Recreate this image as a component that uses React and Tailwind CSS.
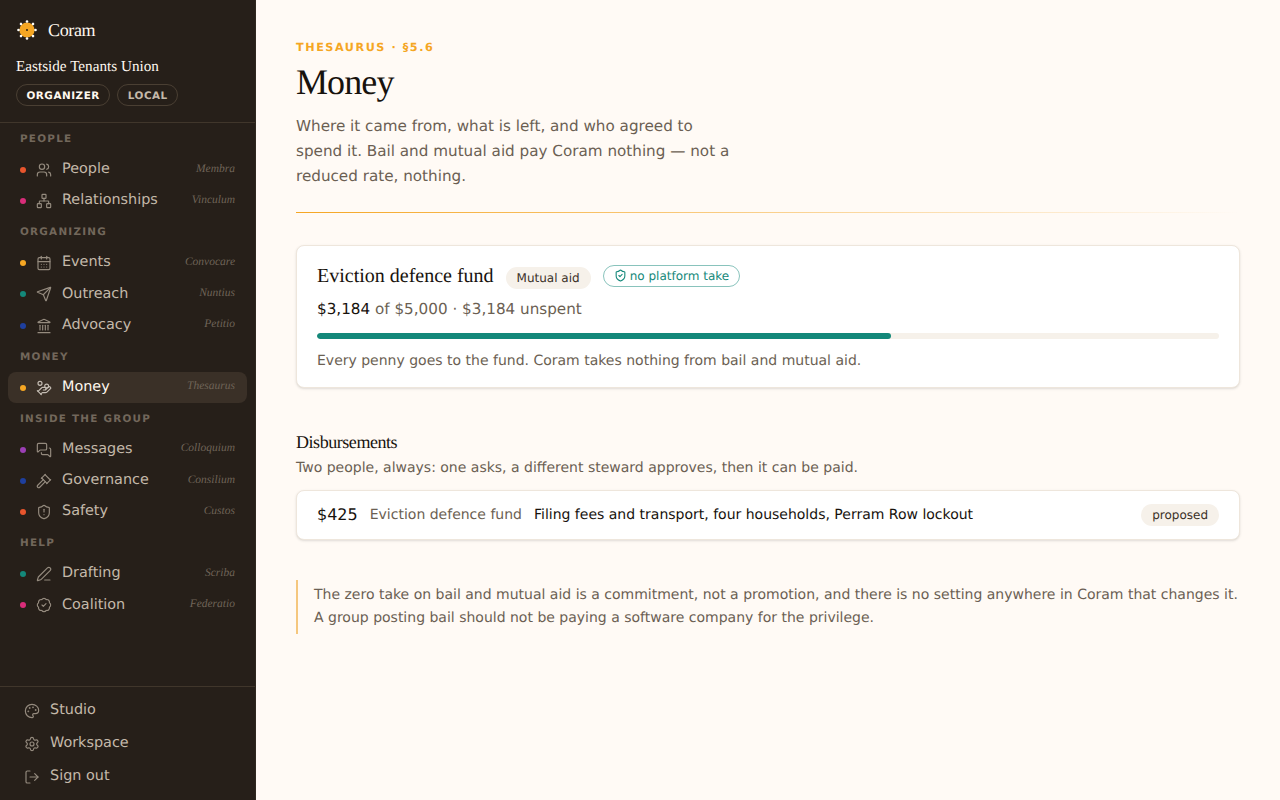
import React from 'react';
import {
  Users, Network, CalendarDays, Send, Landmark, HandCoins, MessagesSquare, Gavel,
  ShieldAlert, PenLine, BadgeCheck, Palette, Settings, LogOut, ShieldCheck,
} from 'lucide-react';

const groups = [
  {
    label: 'People',
    items: [
      { name: 'People', latin: 'Membra', icon: Users, dot: 'bg-[#e8552d]' },
      { name: 'Relationships', latin: 'Vinculum', icon: Network, dot: 'bg-[#d92d7a]' },
    ],
  },
  {
    label: 'Organizing',
    items: [
      { name: 'Events', latin: 'Convocare', icon: CalendarDays, dot: 'bg-[#f5a623]' },
      { name: 'Outreach', latin: 'Nuntius', icon: Send, dot: 'bg-[#14887a]' },
      { name: 'Advocacy', latin: 'Petitio', icon: Landmark, dot: 'bg-[#1e3f9e]' },
    ],
  },
  {
    label: 'Money',
    items: [{ name: 'Money', latin: 'Thesaurus', icon: HandCoins, dot: 'bg-[#f5a623]', active: true }],
  },
  {
    label: 'Inside the group',
    items: [
      { name: 'Messages', latin: 'Colloquium', icon: MessagesSquare, dot: 'bg-[#9b3fb5]' },
      { name: 'Governance', latin: 'Consilium', icon: Gavel, dot: 'bg-[#1e3f9e]' },
      { name: 'Safety', latin: 'Custos', icon: ShieldAlert, dot: 'bg-[#e8552d]' },
    ],
  },
  {
    label: 'Help',
    items: [
      { name: 'Drafting', latin: 'Scriba', icon: PenLine, dot: 'bg-[#14887a]' },
      { name: 'Coalition', latin: 'Federatio', icon: BadgeCheck, dot: 'bg-[#d92d7a]' },
    ],
  },
];

const footerLinks = [
  { name: 'Studio', icon: Palette },
  { name: 'Workspace', icon: Settings },
  { name: 'Sign out', icon: LogOut },
];

function Logo() {
  const petals = [0, 45, 90, 135, 180, 225, 270, 315];
  return (
    <svg width="20" height="20" viewBox="0 0 20 20" className="shrink-0">
      <circle cx="10" cy="10" r="7.6" fill="#f5a623" />
      {petals.map((a) => (
        <circle key={a} cx="10" cy="1.5" r="1.3" fill="#fffdf8" transform={`rotate(${a} 10 10)`} />
      ))}
      <circle cx="10" cy="10" r="0.9" fill="#15100b" />
    </svg>
  );
}

function NavItem({ item }) {
  const Icon = item.icon;
  return (
    <div
      className={`flex h-[31.2px] items-center rounded-lg px-3 ${
        item.active ? 'bg-[#3a3027] text-[#fff8ef]' : 'text-[#c4b9aa]'
      }`}
    >
      <span className={`h-1.5 w-1.5 shrink-0 rounded-full ${item.dot}`} />
      <Icon size={16} strokeWidth={1.75} className="ml-[10px] shrink-0 opacity-70" />
      <span className="ml-[10px] pb-[1.2px] text-[14.4px] leading-none">{item.name}</span>
      <span className="ml-auto pb-[1.2px] font-['Liberation_Serif',serif] text-[11.5px] italic leading-none text-[#6f6458]">{item.latin}</span>
    </div>
  );
}

export default function App() {
  return (
    <div className="flex h-screen overflow-hidden bg-[#fffaf5] font-['DejaVu_Sans',sans-serif] [text-rendering:geometricPrecision]">
      <aside className="flex w-64 shrink-0 flex-col border-r border-[#2f2820] bg-[#261f19]">
        <div className="border-b border-[#40362b] px-4 pb-4 pt-[18px]">
          <div className="flex h-6 items-center gap-[11px] pl-[1px]">
            <Logo />
            <span className="font-['Liberation_Serif',serif] text-lg tracking-[-0.02em] text-[#fff8ef]">Coram</span>
          </div>
          <p className="mt-[15px] font-['Liberation_Serif',serif] text-[15.2px] leading-5 text-[#fff8ef]">Eastside Tenants Union</p>
          <div className="mt-[7px] flex gap-[7px]">
            <span className="rounded-full border border-[#4a3f33] px-[9.5px] pb-[2px] pt-[4px] text-[10.4px] font-bold leading-[14px] tracking-[0.05em] text-[#fff8ef]">ORGANIZER</span>
            <span className="rounded-full border border-[#4a3f33] px-[9.5px] pb-[2px] pt-[4px] text-[10.4px] font-bold leading-[14px] tracking-[0.05em] text-[#c4b9aa]">LOCAL</span>
          </div>
        </div>
        <nav className="flex flex-1 flex-col px-2 pt-[8.9px]">
          {groups.map((group) => (
            <div key={group.label} className="mb-[8.4px]">
              <div className="mb-[8.5px] px-3 text-[10.4px] font-bold uppercase leading-[14px] tracking-[0.12em] text-[#72675b]">{group.label}</div>
              {group.items.map((item) => (
                <NavItem key={item.name} item={item} />
              ))}
            </div>
          ))}
        </nav>
        <div className="flex flex-col border-t border-[#40362b] px-4 pb-2 pt-[6px]">
          {footerLinks.map(({ name, icon: Icon }) => (
            <div key={name} className="flex h-[33px] items-center gap-[10px] pl-2 text-[14.4px] text-[#c4b9aa]">
              <Icon size={16} strokeWidth={1.75} className="mt-[3px] shrink-0 opacity-70" />
              <span className="pt-[2px]">{name}</span>
            </div>
          ))}
        </div>
      </aside>

      <main className="min-w-0 flex-1 px-10 pt-10">
        <p className="pt-px text-[11.2px] font-bold leading-[13px] tracking-[0.14em] text-[#f5a623]">THESAURUS · §5.6</p>
        <h1 className="mt-1 font-['Liberation_Serif',serif] text-[36px] leading-[48px] tracking-[-0.025em] text-[#17120d]">Money</h1>
        <p className="mt-2 w-[440px] text-[15.2px] leading-[25px] text-[#6b5f53]">
          Where it came from, what is left, and who agreed to spend it. Bail and mutual aid pay Coram nothing — not a reduced rate, nothing.
        </p>
        <div className="mt-[23px] h-px bg-linear-to-r from-[#f5a623] to-transparent" />

        <section className="mt-8 rounded-lg border border-[#eee6dc] bg-white px-5 pb-[15px] pt-4 shadow-sm">
          <div className="flex items-center gap-3">
            <h2 className="font-['Liberation_Serif',serif] text-xl leading-[26px] text-[#17120d]">Eviction defence fund</h2>
            <span className="mt-[5px] rounded-full bg-[#f6f1ea] px-[11px] py-[3px] text-xs leading-4 text-[#3a3027]">Mutual aid</span>
            <span className="flex items-center gap-[3px] rounded-full border border-[#14887a]/50 px-[10px] py-[2px] text-xs leading-4 text-[#14887a]">
              <ShieldCheck size={13} strokeWidth={2} />
              no platform take
            </span>
          </div>
          <p className="mt-[9px] text-[15.2px] leading-[22px] text-[#6b5f53]">
            <span className="text-[#17120d]">$3,184</span> of $5,000 · $3,184 unspent
          </p>
          <div className="mt-[13px] h-1.5 overflow-hidden rounded-full bg-[#f6f1ea]">
            <div className="h-full rounded-full bg-[#14887a]" style={{ width: `${(3184 / 5000) * 100}%` }} />
          </div>
          <p className="mt-[11px] text-sm leading-[22px] text-[#6b5f53]">Every penny goes to the fund. Coram takes nothing from bail and mutual aid.</p>
        </section>

        <h3 className="mt-[42px] font-['Liberation_Serif',serif] text-lg leading-6 tracking-[-0.025em] text-[#17120d]">Disbursements</h3>
        <p className="mt-1 text-sm leading-5 text-[#6b5f53]">Two people, always: one asks, a different steward approves, then it can be paid.</p>
        <div className="mt-3 flex h-[50px] items-center rounded-lg border border-[#eee6dc] bg-white px-5 shadow-sm">
          <span className="text-base text-[#17120d]">$425</span>
          <span className="ml-3 text-sm text-[#6b5f53]">Eviction defence fund</span>
          <span className="ml-3 text-sm text-[#17120d]">Filing fees and transport, four households, Perram Row lockout</span>
          <span className="ml-auto rounded-full bg-[#f6f1ea] px-[11px] py-[3px] text-xs leading-4 text-[#3a3027]">proposed</span>
        </div>

        <blockquote className="mt-10 border-l-2 border-[#f5c77e] py-1 pl-4 text-sm leading-[23px] text-[#6b5f53]">
          The zero take on bail and mutual aid is a commitment, not a promotion, and there is no setting anywhere in Coram that changes it. A group posting bail should not be paying a software company for the privilege.
        </blockquote>
      </main>
    </div>
  );
}
